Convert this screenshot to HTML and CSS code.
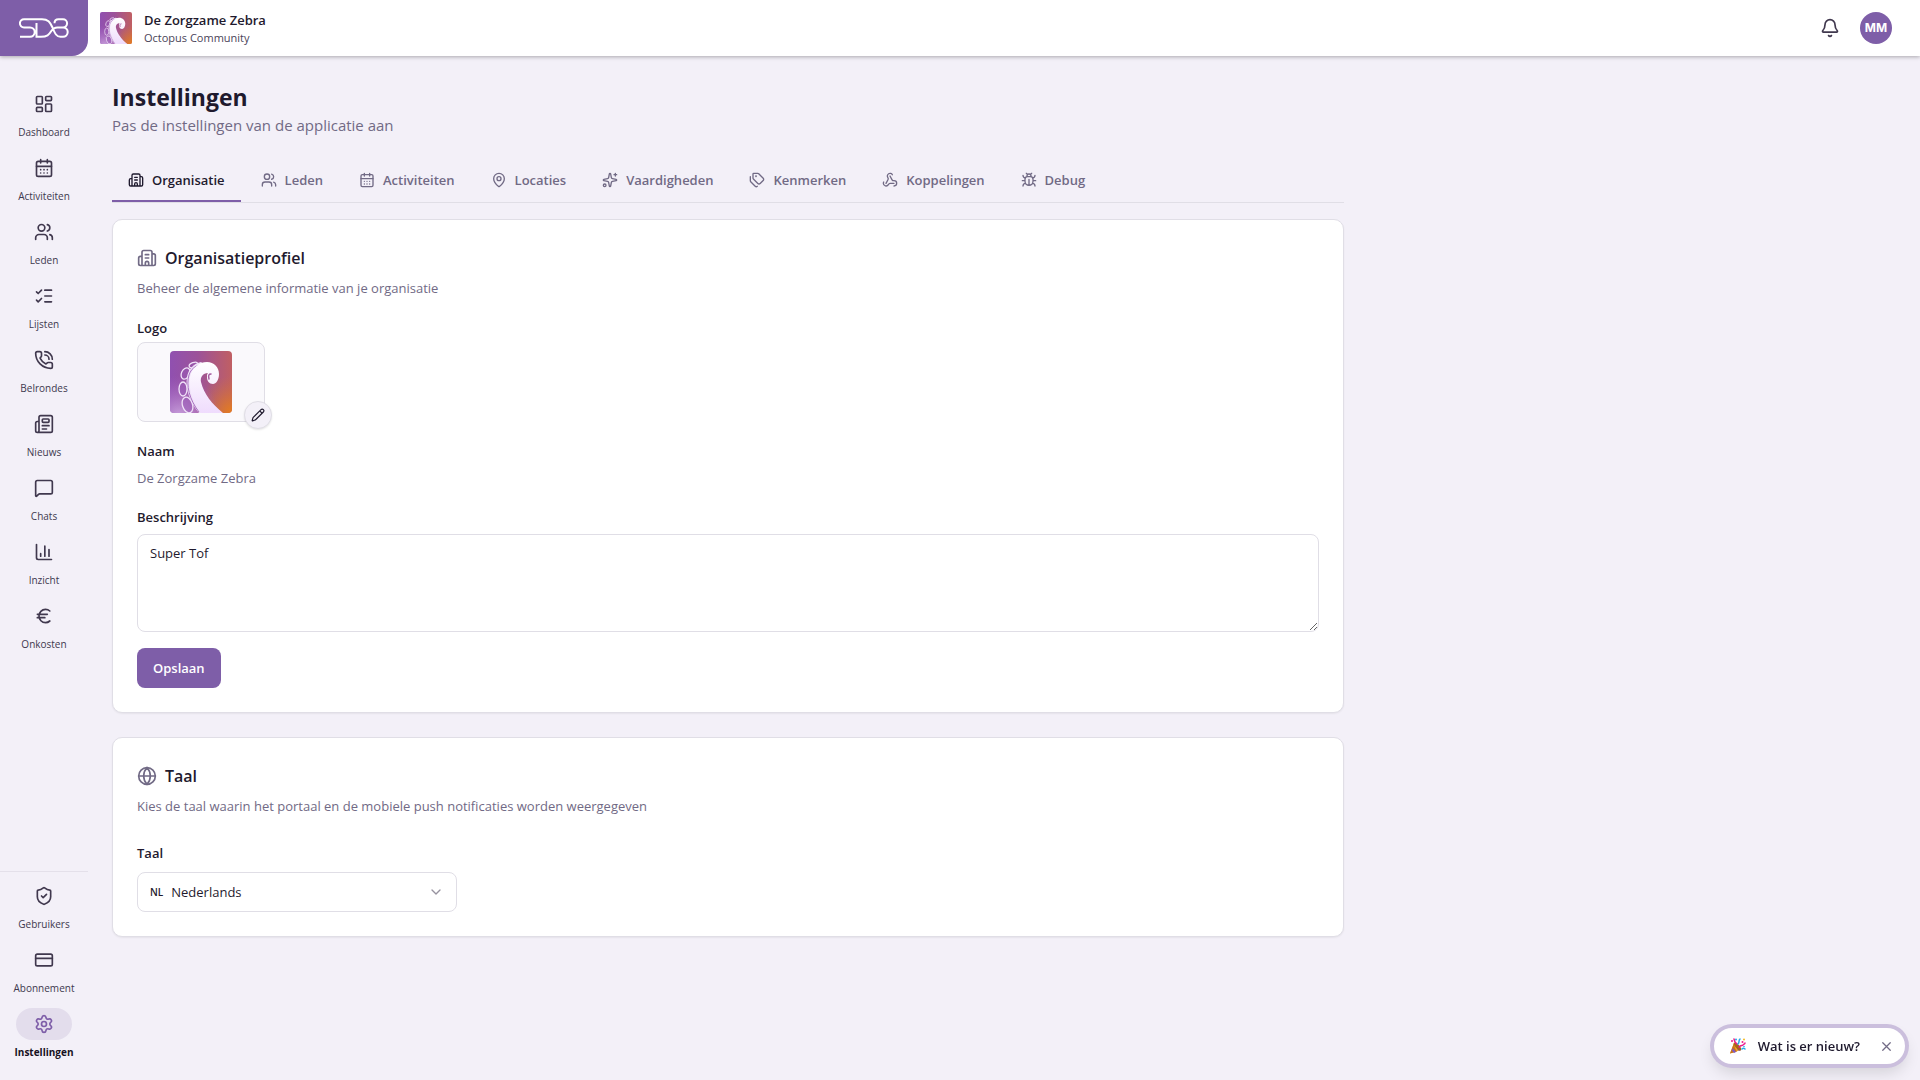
FILE: index.html
```html
<!DOCTYPE html>
<html lang="nl">
<head>
<meta charset="utf-8">
<meta name="viewport" content="width=device-width, initial-scale=1">
<title>Instellingen</title>
<link rel="stylesheet" href="styles.css">
</head>
<body>
<svg class="sprite" aria-hidden="true">
  <symbol id="dashboard" viewBox="0 0 24 24"><rect width="7" height="9" x="3" y="3" rx="1"/><rect width="7" height="5" x="14" y="3" rx="1"/><rect width="7" height="9" x="14" y="12" rx="1"/><rect width="7" height="5" x="3" y="16" rx="1"/></symbol>
  <symbol id="calendar" viewBox="0 0 24 24"><path d="M8 2v4M16 2v4M3 10h18M8 14h.01M12 14h.01M16 14h.01M8 18h.01M12 18h.01M16 18h.01"/><rect width="18" height="18" x="3" y="4" rx="2"/></symbol>
  <symbol id="users" viewBox="0 0 24 24"><path d="M16 21v-2a4 4 0 0 0-4-4H6a4 4 0 0 0-4 4v2M16 3.128a4 4 0 0 1 0 7.744M22 21v-2a4 4 0 0 0-3-3.87"/><circle cx="9" cy="7" r="4"/></symbol>
  <symbol id="list" viewBox="0 0 24 24"><path d="M13 5h8M13 12h8M13 19h8M3 17l2 2 4-4M3 7l2 2 4-4"/></symbol>
  <symbol id="phone" viewBox="0 0 24 24"><path d="M13 2a9 9 0 0 1 9 9M13 6a5 5 0 0 1 5 5M13.832 16.568a1 1 0 0 0 1.213-.303l.355-.465A2 2 0 0 1 17 15h3a2 2 0 0 1 2 2v3a2 2 0 0 1-2 2A18 18 0 0 1 2 4a2 2 0 0 1 2-2h3a2 2 0 0 1 2 2v3a2 2 0 0 1-.8 1.6l-.468.351a1 1 0 0 0-.292 1.233 14 14 0 0 0 6.392 6.384"/></symbol>
  <symbol id="news" viewBox="0 0 24 24"><path d="M15 18h-5M18 14h-8M4 22h16a2 2 0 0 0 2-2V4a2 2 0 0 0-2-2H8a2 2 0 0 0-2 2v16a2 2 0 0 1-4 0v-9a2 2 0 0 1 2-2h2"/><rect width="8" height="4" x="10" y="6" rx="1"/></symbol>
  <symbol id="chat" viewBox="0 0 24 24"><path d="M22 17a2 2 0 0 1-2 2H6.828a2 2 0 0 0-1.414.586l-2.202 2.202A.71.71 0 0 1 2 21.286V5a2 2 0 0 1 2-2h16a2 2 0 0 1 2 2z"/></symbol>
  <symbol id="chart" viewBox="0 0 24 24"><path d="M3 3v16a2 2 0 0 0 2 2h16M18 17V9M13 17V5M8 17v-3"/></symbol>
  <symbol id="euro" viewBox="0 0 24 24"><path d="M4 10h12M4 14h9M19 6a7.7 7.7 0 0 0-5.2-2A7.9 7.9 0 0 0 6 12c0 4.4 3.5 8 7.8 8 2 0 3.8-.8 5.2-2"/></symbol>
  <symbol id="shield" viewBox="0 0 24 24"><path d="M20 13c0 5-3.500 7.500-7.660 8.950a1 1 0 0 1-.67-.01C7.500 20.500 4 18 4 13V6a1 1 0 0 1 1-1c2 0 4.500-1.200 6.240-2.720a1.170 1.170 0 0 1 1.520 0C14.510 3.810 17 5 19 5a1 1 0 0 1 1 1zM9 12l2 2 4-4"/></symbol>
  <symbol id="card" viewBox="0 0 24 24"><rect width="20" height="14" x="2" y="5" rx="2"/><path d="M2 10h20"/></symbol>
  <symbol id="gear" viewBox="0 0 24 24"><path d="M9.671 4.136a2.340 2.340 0 0 1 4.659 0 2.340 2.340 0 0 0 3.319 1.915 2.340 2.340 0 0 1 2.330 4.033 2.340 2.340 0 0 0 0 3.831 2.340 2.340 0 0 1-2.330 4.033 2.340 2.340 0 0 0-3.319 1.915 2.340 2.340 0 0 1-4.659 0 2.340 2.340 0 0 0-3.320-1.915 2.340 2.340 0 0 1-2.330-4.033 2.340 2.340 0 0 0 0-3.831A2.340 2.340 0 0 1 6.350 6.051a2.340 2.340 0 0 0 3.319-1.915"/><circle cx="12" cy="12" r="3"/></symbol>
  <symbol id="building" viewBox="0 0 24 24"><path d="M10 12h4M10 8h4M14 21v-3a2 2 0 0 0-4 0v3M6 10H4a2 2 0 0 0-2 2v7a2 2 0 0 0 2 2h16a2 2 0 0 0 2-2V9a2 2 0 0 0-2-2h-2M6 21V5a2 2 0 0 1 2-2h8a2 2 0 0 1 2 2v16"/></symbol>
  <symbol id="pin" viewBox="0 0 24 24"><path d="M20 10c0 4.993-5.539 10.193-7.399 11.799a1 1 0 0 1-1.202 0C9.539 20.193 4 14.993 4 10a8 8 0 0 1 16 0"/><circle cx="12" cy="10" r="3"/></symbol>
  <symbol id="sparkles" viewBox="0 0 24 24"><path d="M11.017 2.814a1 1 0 0 1 1.966 0l1.051 5.558a2 2 0 0 0 1.594 1.594l5.558 1.051a1 1 0 0 1 0 1.966l-5.558 1.051a2 2 0 0 0-1.594 1.594l-1.051 5.558a1 1 0 0 1-1.966 0l-1.051-5.558a2 2 0 0 0-1.594-1.594l-5.558-1.051a1 1 0 0 1 0-1.966l5.558-1.051a2 2 0 0 0 1.594-1.594zM20 2v4M22 4h-4"/><circle cx="4" cy="20" r="2"/></symbol>
  <symbol id="tags" viewBox="0 0 24 24"><path d="M13.172 2a2 2 0 0 1 1.414.586l6.710 6.710a2.400 2.400 0 0 1 0 3.408l-4.592 4.592a2.400 2.400 0 0 1-3.408 0l-6.710-6.710A2 2 0 0 1 6 9.172V3a1 1 0 0 1 1-1zM2 7v6.172a2 2 0 0 0 .586 1.414l6.710 6.710a2.400 2.400 0 0 0 3.191.193"/><circle cx="10.500" cy="6.500" r=".5"/></symbol>
  <symbol id="webhook" viewBox="0 0 24 24"><path d="M18 16.980h-5.990c-1.100 0-1.950.94-2.480 1.900A4 4 0 0 1 2 17c.01-.7.2-1.400.57-2M6 17l3.130-5.780c.53-.97.1-2.180-.5-3.100a4 4 0 1 1 6.890-4.060M12 6l3.130 5.730C15.660 12.700 16.900 13 18 13a4 4 0 0 1 0 8"/></symbol>
  <symbol id="bug" viewBox="0 0 24 24"><path d="M12 20v-9M14 7a4 4 0 0 1 4 4v3a6 6 0 0 1-12 0v-3a4 4 0 0 1 4-4zM14.120 3.880 16 2M21 21a4 4 0 0 0-3.810-4M21 5a4 4 0 0 1-3.550 3.970M22 13h-4M3 21a4 4 0 0 1 3.810-4M3 5a4 4 0 0 0 3.550 3.970M6 13H2M8 2l1.880 1.880M9 7.130V6a3 3 0 1 1 6 0v1.130"/></symbol>
  <symbol id="bell" viewBox="0 0 24 24"><path d="M10.268 21a2 2 0 0 0 3.464 0M3.262 15.326A1 1 0 0 0 4 17h16a1 1 0 0 0 .74-1.673C19.410 13.956 18 12.499 18 8A6 6 0 0 0 6 8c0 4.499-1.411 5.956-2.738 7.326"/></symbol>
  <symbol id="pencil" viewBox="0 0 24 24"><path d="M21.174 6.812a1 1 0 0 0-3.986-3.987L3.842 16.174a2 2 0 0 0-.5.83l-1.321 4.352a.5.5 0 0 0 .623.622l4.353-1.320a2 2 0 0 0 .83-.497zM15 5l4 4"/></symbol>
  <symbol id="globe" viewBox="0 0 24 24"><circle cx="12" cy="12" r="10"/><path d="M12 2a14.500 14.500 0 0 0 0 20 14.500 14.500 0 0 0 0-20M2 12h20"/></symbol>
  <symbol id="chevron" viewBox="0 0 24 24"><path d="M6 9l6 6 6-6"/></symbol>
  <symbol id="close" viewBox="0 0 24 24"><path d="M18 6 6 18M6 6l12 12"/></symbol>
  <linearGradient id="tileBase" x1="0" y1="0" x2="1" y2="0"><stop offset="0" stop-color="#9050b0"/><stop offset=".45" stop-color="#9c5299"/><stop offset="1" stop-color="#c05f63"/></linearGradient>
  <radialGradient id="tileWarm" cx="1" cy="1" r=".6"><stop offset="0" stop-color="#e67e1c"/><stop offset="1" stop-color="#d0703a" stop-opacity="0"/></radialGradient>
  <radialGradient id="tileLight" cx=".15" cy="1.050" r=".65"><stop offset="0" stop-color="#c9a2dc"/><stop offset="1" stop-color="#a968c4" stop-opacity="0"/></radialGradient>
  <linearGradient id="armFill" x1="0" y1="0" x2="0" y2="1"><stop offset="0" stop-color="#fff"/><stop offset="1" stop-color="#efdcfd"/></linearGradient>
  <symbol id="tentacle" viewBox="0 0 62 62">
    <rect width="62" height="62" fill="url(#tileBase)"/><rect width="62" height="62" fill="url(#tileWarm)"/><rect width="62" height="62" fill="url(#tileLight)"/>
    <g fill="#9a5cb8" fill-opacity=".5" stroke="#f0e2f8" stroke-width="1.300">
      <ellipse cx="23.500" cy="14" rx="4.500" ry="2.500" transform="rotate(-20 23.500 14)"/>
      <ellipse cx="15.500" cy="22.500" rx="4" ry="6" transform="rotate(25 15.500 22.500)"/>
      <ellipse cx="13" cy="38" rx="4" ry="7"/>
      <ellipse cx="17.500" cy="54" rx="5" ry="8" transform="rotate(-18 17.500 54)"/>
    </g>
    <path fill="#f0e2f8" d="M29 62C20 51 15 38 17 26c1-7 7-14 14-15l4 3-14 12 2 20 9 16z"/>
    <path fill="none" stroke="#a871c2" stroke-width="1" d="M29 61C19 48 16 34 19 24c2-6 6-9 11-10"/>
    <path fill="url(#armFill)" d="M31 62C22 50 18 36 20 26c2-9 9-15 17-15 7 0 12 5 12 12 0 6-3 10-6 10-4 0-6-3-6-7 0-2 0-3 1-4-5 0-8 4-7 9 3 12 11 22 22 31z"/>
    <path fill="none" stroke="#a45a9f" stroke-width="1.500" stroke-linecap="round" d="M41 23c-2 0-3 1-2 5"/>
  </symbol>
</svg>

<header class="topbar">
  <a class="brand" href="#" aria-label="SDB">
    <svg class="brand-mark" viewBox="0 0 50 20" aria-hidden="true"><path d="M18 1.200H5a4.100 4.100 0 0 0 0 8.200h6a4.700 4.700 0 0 1 0 9.400H1M17.500 5v13.800H22c6 0 8-2 10.500-6 1.500-2.500 3-3.400 6-3.400H44M18 1.200h5c6 0 8 3 10.500 8.300 2.500 6.300 4 9.300 8 9.300H44a4.700 4.700 0 0 0 0-9.400 4.100 4.100 0 0 0 0-8.200h-4.500c-2.500 0-4 1.800-4 4"/></svg>
  </a>
  <div class="org">
    <svg class="org-logo" aria-hidden="true"><use href="#tentacle"/></svg>
    <div>
      <div class="org-name">De Zorgzame Zebra</div>
      <div class="org-sub">Octopus Community</div>
    </div>
  </div>
  <div class="account">
    <button class="bell" aria-label="Meldingen"><svg class="icon"><use href="#bell"/></svg></button>
    <button class="avatar">MM</button>
  </div>
</header>

<div class="shell">
  <nav class="sidebar">
    <div class="nav-group">
      <a class="nav-item" href="#"><span class="nav-icon"><svg class="icon"><use href="#dashboard"/></svg></span>Dashboard</a>
      <a class="nav-item" href="#"><span class="nav-icon"><svg class="icon"><use href="#calendar"/></svg></span>Activiteiten</a>
      <a class="nav-item" href="#"><span class="nav-icon"><svg class="icon"><use href="#users"/></svg></span>Leden</a>
      <a class="nav-item" href="#"><span class="nav-icon"><svg class="icon"><use href="#list"/></svg></span>Lijsten</a>
      <a class="nav-item" href="#"><span class="nav-icon"><svg class="icon"><use href="#phone"/></svg></span>Belrondes</a>
      <a class="nav-item" href="#"><span class="nav-icon"><svg class="icon"><use href="#news"/></svg></span>Nieuws</a>
      <a class="nav-item" href="#"><span class="nav-icon"><svg class="icon"><use href="#chat"/></svg></span>Chats</a>
      <a class="nav-item" href="#"><span class="nav-icon"><svg class="icon"><use href="#chart"/></svg></span>Inzicht</a>
      <a class="nav-item" href="#"><span class="nav-icon"><svg class="icon"><use href="#euro"/></svg></span>Onkosten</a>
    </div>
    <div class="nav-group nav-bottom">
      <a class="nav-item" href="#"><span class="nav-icon"><svg class="icon"><use href="#shield"/></svg></span>Gebruikers</a>
      <a class="nav-item" href="#"><span class="nav-icon"><svg class="icon"><use href="#card"/></svg></span>Abonnement</a>
      <a class="nav-item active" href="#" aria-current="page"><span class="nav-icon"><svg class="icon"><use href="#gear"/></svg></span>Instellingen</a>
    </div>
  </nav>

  <main class="content">
    <h1>Instellingen</h1>
    <p class="lead">Pas de instellingen van de applicatie aan</p>

    <div class="tabs" role="tablist">
      <button class="tab active" role="tab" aria-selected="true"><svg class="icon"><use href="#building"/></svg>Organisatie</button>
      <button class="tab" role="tab"><svg class="icon"><use href="#users"/></svg>Leden</button>
      <button class="tab" role="tab"><svg class="icon"><use href="#calendar"/></svg>Activiteiten</button>
      <button class="tab" role="tab"><svg class="icon"><use href="#pin"/></svg>Locaties</button>
      <button class="tab" role="tab"><svg class="icon"><use href="#sparkles"/></svg>Vaardigheden</button>
      <button class="tab" role="tab"><svg class="icon"><use href="#tags"/></svg>Kenmerken</button>
      <button class="tab" role="tab"><svg class="icon"><use href="#webhook"/></svg>Koppelingen</button>
      <button class="tab" role="tab"><svg class="icon"><use href="#bug"/></svg>Debug</button>
    </div>

    <section class="card">
      <h2><svg class="icon"><use href="#building"/></svg>Organisatieprofiel</h2>
      <p class="card-desc">Beheer de algemene informatie van je organisatie</p>
      <div class="logo-field">
        <div class="label">Logo</div>
        <div class="logo-box">
          <svg class="logo-img" aria-hidden="true"><use href="#tentacle"/></svg>
          <button class="edit" aria-label="Logo wijzigen"><svg class="icon"><use href="#pencil"/></svg></button>
        </div>
      </div>
      <div class="field name-field">
        <div class="label">Naam</div>
        <div class="value">De Zorgzame Zebra</div>
      </div>
      <div class="field">
        <label class="label" for="description">Beschrijving</label>
        <textarea id="description">Super Tof</textarea>
      </div>
      <button class="save">Opslaan</button>
    </section>

    <section class="card">
      <h2><svg class="icon"><use href="#globe"/></svg>Taal</h2>
      <p class="card-desc">Kies de taal waarin het portaal en de mobiele push notificaties worden weergegeven</p>
      <div class="field lang-field">
        <label class="label" for="language">Taal</label>
        <div class="select">
          <span class="lang-code">NL</span>
          <select id="language"><option>Nederlands</option></select>
          <svg class="icon"><use href="#chevron"/></svg>
        </div>
      </div>
    </section>
  </main>
</div>

<div class="whats-new">
  <svg class="popper" viewBox="0 0 16 16" aria-hidden="true">
    <path fill="#f5a623" d="M4 5 0 15.500 11 12z"/><path fill="#c9731c" d="M0 15.500 4 5c0 3 1 6 3 8.500z"/>
    <path fill="#7b5ac8" d="M2 12.500 4 15l2-1-3.500-4zM7 11l2 2 2-1-4-4z"/>
    <ellipse cx="7.500" cy="8.500" rx="2" ry="5" transform="rotate(-42 7.500 8.500)" fill="#a8641c"/>
    <path fill="none" stroke="#ec1c8c" stroke-width="1.500" stroke-linecap="round" d="M4 1l1 3 2 2M9 9c2-2 3-1 4-2s2-1 2-2"/>
    <path fill="none" stroke="#2aa7ea" stroke-width="1.500" stroke-linecap="round" d="M8 6c2-2 0-3 2-5M12 11c1-1 2-1 3 0"/>
    <g fill="#ec1c8c"><circle cx="2" cy="3" r="1"/><circle cx="12.500" cy="4" r="1"/></g><g fill="#2aa7ea"><circle cx="6" cy="1.500" r="1"/><circle cx="14" cy="8.500" r=".8"/></g><circle cx="14" cy="1.500" r="1" fill="#f5b91c"/>
  </svg>
  <button class="news-open">Wat is er nieuw?</button>
  <button class="news-close" aria-label="Sluiten"><svg class="icon"><use href="#close"/></svg></button>
</div>
</body>
</html>
```

FILE: styles.css
```css
:root {
  --purple: #7e5ea8;
  --bg: #f3f0f8;
  --ink: #1f1a2e;
  --muted: #716a85;
  --line: #e0dee6;
}

* { box-sizing: border-box; }

body {
  margin: 0;
  min-height: 100vh;
  display: flex;
  flex-direction: column;
  background: var(--bg);
  color: var(--ink);
  font: 13px/20px "Open Sans", "Noto Sans", sans-serif;
}

h1, h2, p { margin: 0; }
a { color: inherit; text-decoration: none; }
button, select, textarea { font: inherit; color: inherit; }
button { border: 0; padding: 0; background: none; cursor: pointer; }

.sprite { position: absolute; width: 0; height: 0; }

.icon {
  display: block;
  flex: none;
  width: 20px;
  height: 20px;
  fill: none;
  stroke: currentColor;
  stroke-width: 2;
  stroke-linecap: round;
  stroke-linejoin: round;
}

.topbar {
  display: flex;
  align-items: center;
  height: 56px;
  background: #fff;
  box-shadow: 0 1px 4px rgb(0 0 0 / 30%);
}

.brand {
  display: grid;
  place-items: center;
  width: 88px;
  height: 56px;
  border-bottom-right-radius: 16px;
  background: var(--purple);
}

.brand-mark {
  width: 50px;
  height: 20px;
  fill: none;
  stroke: #fff;
  stroke-width: 2;
}

.org {
  display: flex;
  align-items: center;
  gap: 12px;
  margin-left: 12px;
}

.org-logo { display: block; width: 32px; height: 32px; border-radius: 2px; }
.org-name { font-weight: 600; line-height: 20px; }
.org-sub { font-size: 11px; line-height: 16px; color: #4a4458; }

.account {
  display: flex;
  align-items: center;
  gap: 20px;
  margin-left: auto;
  padding-right: 28px;
  color: #40384e;
}

.avatar {
  width: 32px;
  height: 32px;
  border-radius: 50%;
  background: var(--purple);
  color: #fff;
  font: 700 12px/32px Inter, "Liberation Sans", sans-serif;
}

.shell { display: flex; flex: 1; }

.sidebar {
  display: flex;
  flex: none;
  flex-direction: column;
  justify-content: space-between;
  width: 88px;
  padding: 32px 0 20px;
}

.nav-group { display: flex; flex-direction: column; gap: 12px; }
.nav-bottom { padding-top: 8px; border-top: 1px solid #e4e0ea; }

.nav-item {
  display: flex;
  flex-direction: column;
  align-items: center;
  gap: 4px;
  color: #40384e;
  font-size: 10px;
  line-height: 16px;
}

.nav-icon {
  display: grid;
  place-items: center;
  width: 56px;
  height: 32px;
  border-radius: 16px;
}

.nav-item.active { color: #17121f; font-weight: 700; }
.nav-item.active .nav-icon { background: #e3ddec; color: var(--purple); }

.content {
  flex: 1;
  max-width: 1280px;
  padding: 24px;
}

h1 { font-size: 23px; line-height: 34px; font-weight: 700; }
.lead { color: var(--muted); font-size: 15px; line-height: 22px; }

.tabs {
  display: flex;
  gap: 4px;
  margin: 22px 0 16px;
  border-bottom: 1px solid var(--line);
}

.tab {
  display: flex;
  align-items: center;
  gap: 8px;
  padding: 12px 16px 10px;
  border-bottom: 2px solid transparent;
  color: var(--muted);
  font-weight: 600;
}

.tab .icon { width: 16px; height: 16px; }
.tab.active { border-color: var(--purple); color: var(--ink); }

.card {
  padding: 24px;
  border: 1px solid var(--line);
  border-radius: 10px;
  background: #fff;
  box-shadow: 0 1px 2px rgb(0 0 0 / 6%);
}

.card + .card { margin-top: 24px; }

h2 {
  display: flex;
  align-items: center;
  gap: 8px;
  font-size: 16px;
  line-height: 28px;
  font-weight: 600;
}

h2 .icon { color: var(--muted); }
.card-desc { margin-top: 6px; color: var(--muted); }
.label { font-weight: 600; }

.logo-field { margin-top: 20px; }

.logo-box {
  position: relative;
  display: grid;
  place-items: center;
  width: 128px;
  height: 80px;
  margin-top: 4px;
  border: 1px solid var(--line);
  border-radius: 8px;
  background: #faf9fc;
}

.logo-img { display: block; width: 62px; height: 62px; border-radius: 4px; }

.edit {
  position: absolute;
  right: -8px;
  bottom: -8px;
  display: grid;
  place-items: center;
  width: 28px;
  height: 28px;
  border: 1px solid var(--line);
  border-radius: 50%;
  background: var(--bg);
  box-shadow: 0 1px 2px rgb(0 0 0 / 10%);
}

.edit .icon { width: 14px; height: 14px; }

.field { display: flex; flex-direction: column; gap: 7px; }
.name-field { margin: 19px 0; }
.value { color: var(--muted); }

textarea {
  display: block;
  width: 100%;
  height: 98px;
  padding: 8px 12px;
  border: 1px solid var(--line);
  border-radius: 8px;
  background: #fff;
  resize: vertical;
}

.save {
  height: 40px;
  margin-top: 16px;
  padding: 0 16px;
  border-radius: 8px;
  background: var(--purple);
  color: #fff;
  font-weight: 600;
}

.lang-field { margin-top: 27px; gap: 9px; }

.select {
  display: flex;
  align-items: center;
  gap: 8px;
  width: 320px;
  height: 40px;
  padding: 0 12px;
  border: 1px solid var(--line);
  border-radius: 8px;
}

.lang-code { font-size: 10px; font-weight: 600; }

.select select {
  flex: 1;
  appearance: none;
  border: 0;
  padding: 0;
  background: none;
}

.select .icon { width: 16px; height: 16px; color: #97929f; }

.whats-new {
  position: fixed;
  right: 15px;
  bottom: 16px;
  display: flex;
  align-items: center;
  height: 36px;
  padding: 0 10px 0 16px;
  border-radius: 18px;
  background: #fff;
  box-shadow: 0 0 0 4px #cbbfdd, 0 8px 16px rgb(0 0 0 / 14%);
}

.popper { width: 16px; height: 16px; }
.news-open { margin: 0 18px 0 12px; font-weight: 600; }
.news-close { padding: 1px; color: var(--muted); }
.news-close .icon { width: 15px; height: 15px; }
```
